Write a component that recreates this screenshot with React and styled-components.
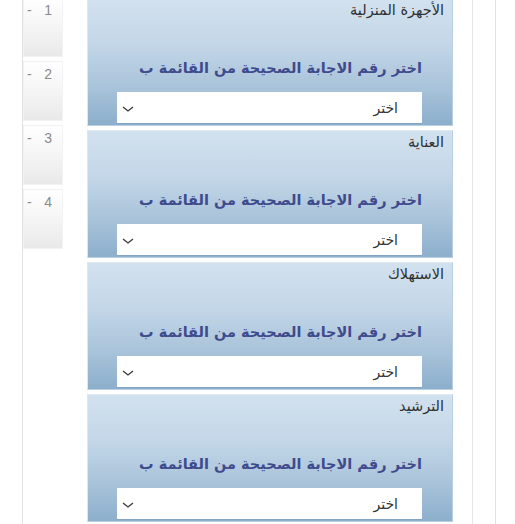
import React from "react";
import styled, { createGlobalStyle } from "styled-components";

const Global = createGlobalStyle`
  html, body { margin: 0; padding: 0; background: #fff; }
  body { font-family: "DejaVu Sans", "Liberation Sans", sans-serif; overflow: hidden; }
`;

const Frame = styled.div`
  margin-left: 22px;
  width: 472px;
  height: 524px;
  border-left: 1px solid #e2e2e2;
  border-right: 1px solid #e2e2e2;
  overflow: hidden;
`;

const Inner = styled.div`
  display: flex;
  align-items: flex-start;
  width: 449px;
  height: 100%;
  border-right: 1px solid #e6e6e6;
`;

const Tiles = styled.div`
  display: flex;
  flex-direction: column;
  gap: 4px;
  width: 40px;
  margin-top: -3px;
`;

const Tile = styled.div`
  box-sizing: border-box;
  height: 60px;
  display: flex;
  justify-content: space-between;
  align-items: flex-start;
  background: linear-gradient(to bottom, #ffffff 0%, #f6f6f6 45%, #e9e9e9 100%);
  border: 1px solid #f2f2f2;
  font-family: "Liberation Sans", Arial, sans-serif;
  font-size: 14px;
  color: #8a8a8a;
  padding: 4px 10px 0 3px;
`;

const Cards = styled.div`
  display: flex;
  flex-direction: column;
  gap: 4px;
  width: 366px;
  margin-left: 24px;
  margin-top: -2px;
`;

const Card = styled.div`
  box-sizing: border-box;
  height: 128px;
  display: flex;
  flex-direction: column;
  align-items: stretch;
  background: linear-gradient(to bottom, #d2e1ee 0%, #c4d7e8 35%, #a9c3da 70%, #8cafcc 100%);
  border: 1px solid #b9cfe2;
  border-left-color: #dae6f0;
  border-top-color: #dfe9f2;
  direction: rtl;
`;

const Title = styled.div`
  font-size: 14.5px;
  color: #2f2f2f;
  padding: 3px 8px 0 0;
  height: 61px;
  box-sizing: border-box;
`;

const Question = styled.div`
  font-size: 14.5px;
  font-weight: bold;
  color: #3f4b8c;
  padding-right: 30px;
  box-sizing: border-box;
  height: 32px;
`;

const Select = styled.div`
  box-sizing: border-box;
  margin: 0 30px 0 29px;
  height: 31px;
  background: #fff;
  display: flex;
  align-items: center;
  justify-content: space-between;
  padding: 0 24px 0 5px;
  font-size: 14px;
  color: #333;
  box-shadow: 0 1px 0 rgba(120,150,180,0.4);
`;

const Chevron = () => (
  <svg width="12" height="6" viewBox="0 0 12 6" style={{ marginTop: 2 }}>
    <polyline points="1,1 6,5 11,1" fill="none" stroke="#333" strokeWidth="1.2" />
  </svg>
);

const items = ["الأجهزة المنزلية", "العناية", "الاستهلاك", "الترشيد"];

export default function App() {
  return (
    <>
      <Global />
      <Frame>
        <Inner>
          <Tiles>
            {[1, 2, 3, 4].map((n) => (
              <Tile key={n}>
                <span>-</span>
                <span>{n}</span>
              </Tile>
            ))}
          </Tiles>
          <Cards>
            {items.map((t) => (
              <Card key={t}>
                <Title>{t}</Title>
                <Question>اختر رقم الاجابة الصحيحة من القائمة ب</Question>
                <Select>
                  <span>اختر</span>
                  <Chevron />
                </Select>
              </Card>
            ))}
          </Cards>
        </Inner>
      </Frame>
    </>
  );
}
